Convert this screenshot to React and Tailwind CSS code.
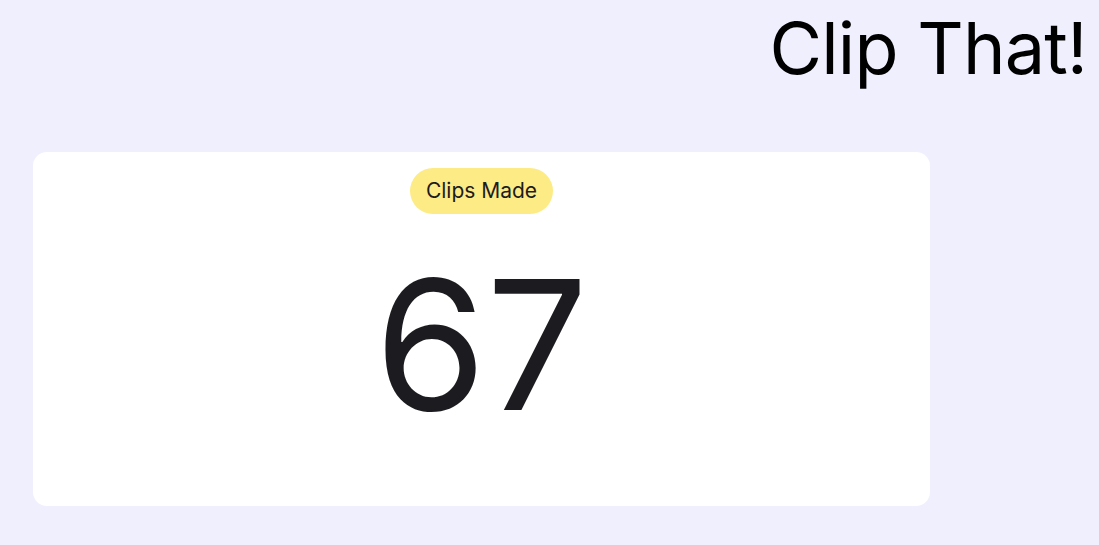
export default function App() {
  return (
    <div className="min-h-screen bg-[#f0effd] font-['Inter',sans-serif] text-black">
      {/* Header */}
      <header className="flex justify-end pr-3 pt-3">
        <h1 className="text-[72px] leading-none tracking-[-0.8px]">Clip That!</h1>
      </header>

      {/* Stat card */}
      <main className="px-[33px] pt-[68px]">
        <div className="w-[897px] h-[354px] bg-white rounded-[14px] flex flex-col items-center pt-4">
          <span className="bg-[#fdeb85] rounded-full px-4 py-[9px] text-[21px] leading-7 text-[#1c1c20]">
            Clips Made
          </span>
          <div className="mt-[41px] text-[180px] leading-none text-[#1c1c20]">67</div>
        </div>
      </main>
    </div>
  );
}
